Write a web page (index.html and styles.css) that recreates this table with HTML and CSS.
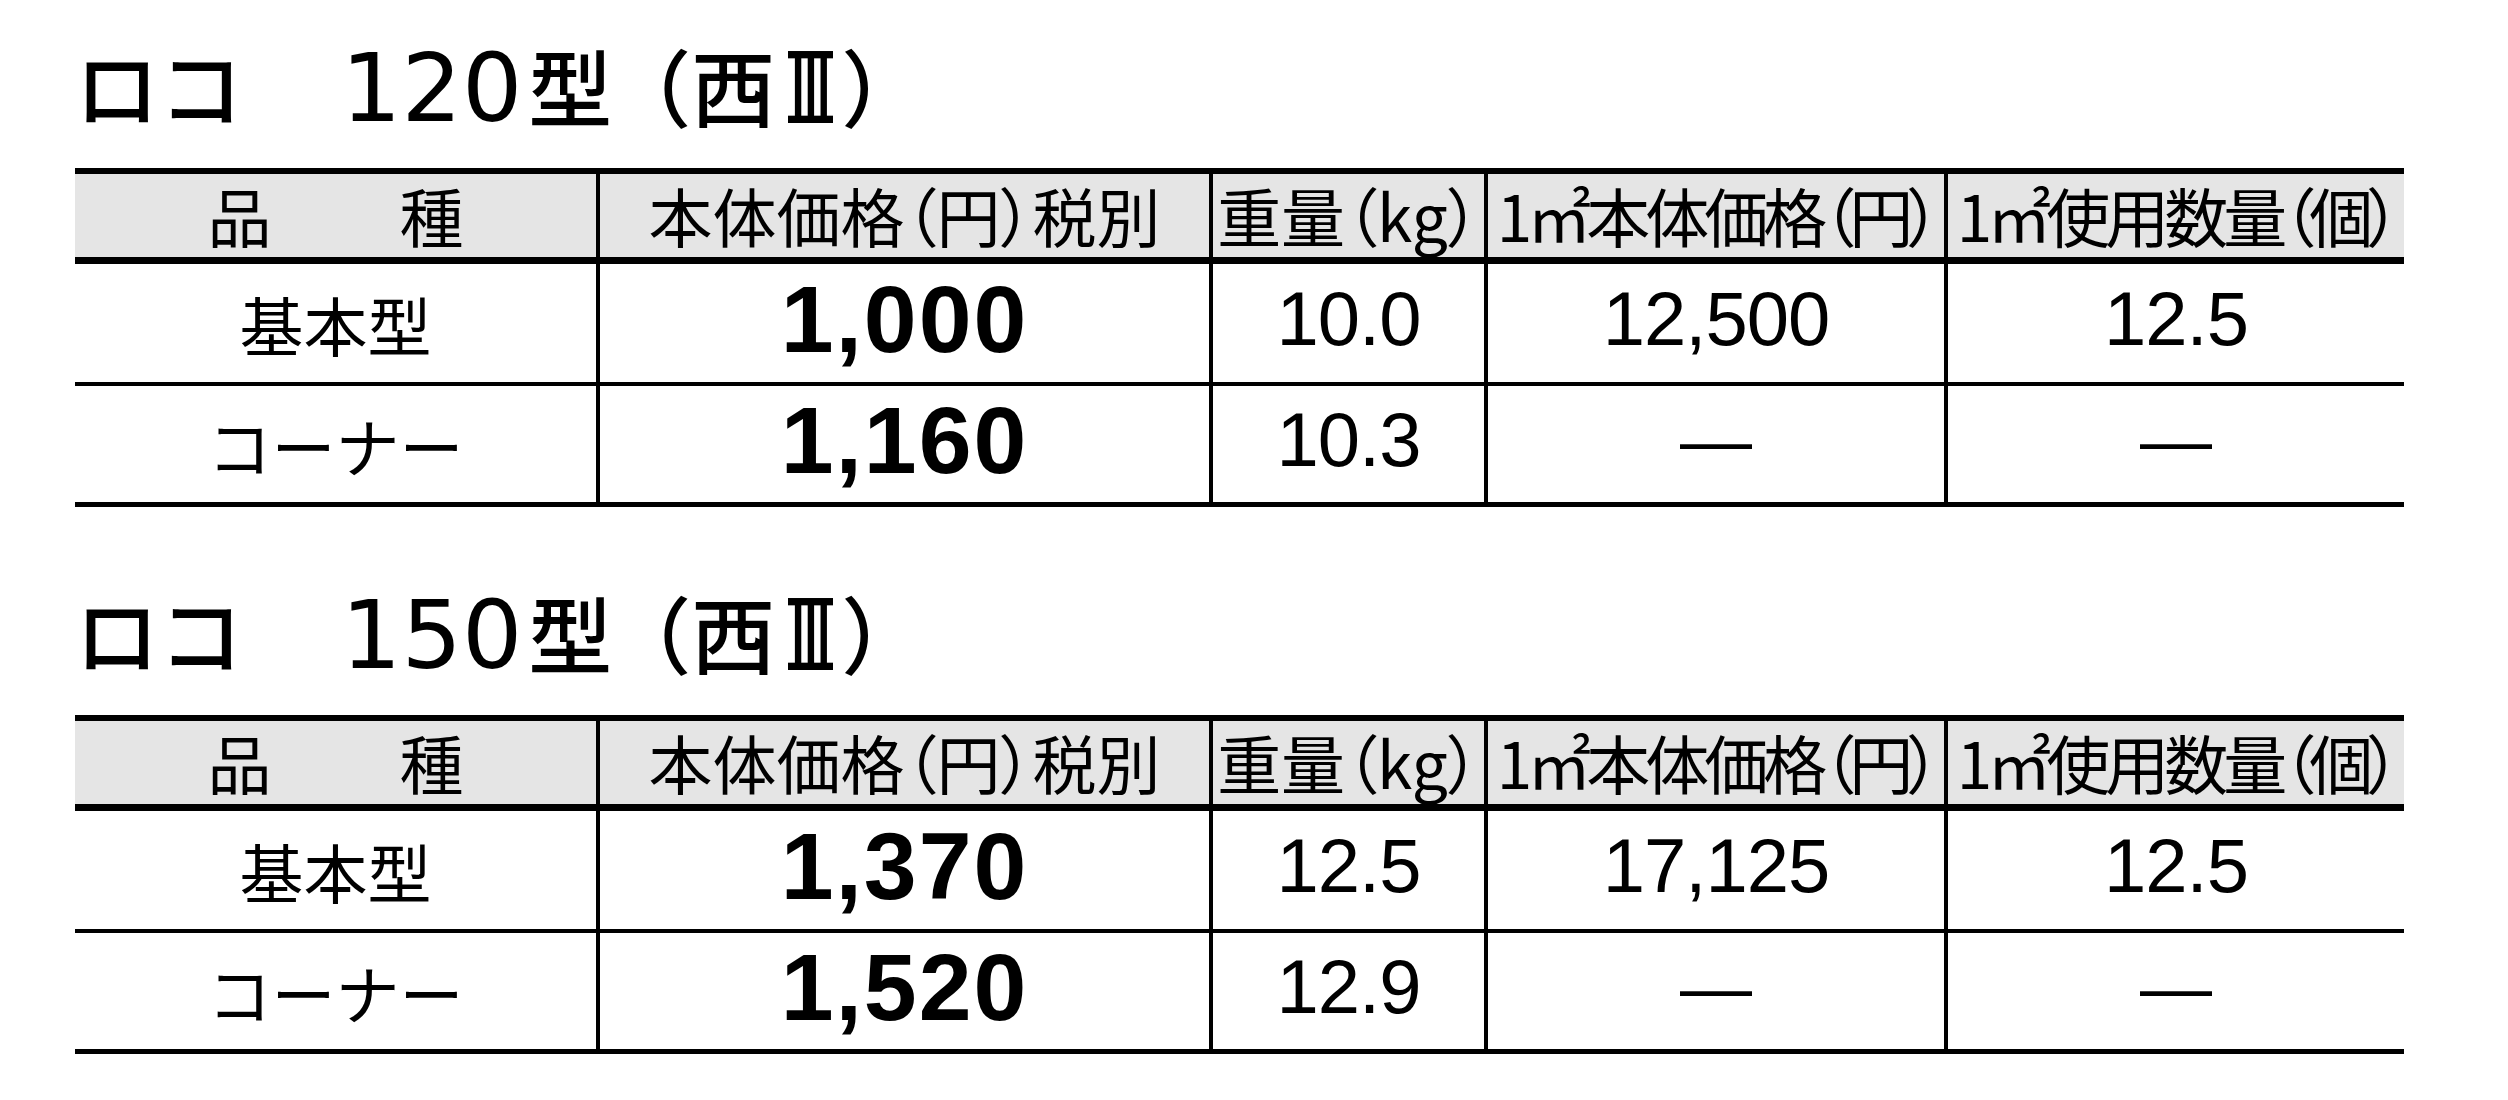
FILE: index.html
```html
<!DOCTYPE html>
<html lang="ja">
<head>
<meta charset="utf-8">
<title>ロコ 価格表</title>
<link rel="stylesheet" href="styles.css">
</head>
<body>
<div class="page">
  <section class="block">
    <h2 class="title">ロコ　<span class="model">120</span>型<span class="spec">（西<span class="roman">Ⅲ</span>）</span></h2>
    <table class="price-table">
      <colgroup>
        <col class="c-name"><col class="c-price"><col class="c-weight"><col class="c-area-price"><col class="c-area-qty">
      </colgroup>
      <thead>
        <tr class="head">
          <th>品　　種</th>
          <th>本体価格（円）税別</th>
          <th>重量（kg）</th>
          <th class="tight">1㎡本体価格（円）</th>
          <th class="tight">1㎡使用数量（個）</th>
        </tr>
      </thead>
      <tbody>
        <tr class="row-a">
          <td class="jp">基本型</td>
          <td class="price">1,000</td>
          <td class="num">10.0</td>
          <td class="num">12,500</td>
          <td class="num">12.5</td>
        </tr>
        <tr class="row-b">
          <td class="jp">コーナー</td>
          <td class="price">1,160</td>
          <td class="num">10.3</td>
          <td class="num dash">—</td>
          <td class="num dash">—</td>
        </tr>
      </tbody>
    </table>
  </section>

  <section class="block">
    <h2 class="title">ロコ　<span class="model">150</span>型<span class="spec">（西<span class="roman">Ⅲ</span>）</span></h2>
    <table class="price-table">
      <colgroup>
        <col class="c-name"><col class="c-price"><col class="c-weight"><col class="c-area-price"><col class="c-area-qty">
      </colgroup>
      <thead>
        <tr class="head">
          <th>品　　種</th>
          <th>本体価格（円）税別</th>
          <th>重量（kg）</th>
          <th class="tight">1㎡本体価格（円）</th>
          <th class="tight">1㎡使用数量（個）</th>
        </tr>
      </thead>
      <tbody>
        <tr class="row-a">
          <td class="jp">基本型</td>
          <td class="price">1,370</td>
          <td class="num">12.5</td>
          <td class="num">17,125</td>
          <td class="num">12.5</td>
        </tr>
        <tr class="row-b">
          <td class="jp">コーナー</td>
          <td class="price">1,520</td>
          <td class="num">12.9</td>
          <td class="num dash">—</td>
          <td class="num dash">—</td>
        </tr>
      </tbody>
    </table>
  </section>
</div>
</body>
</html>
```

FILE: styles.css
```css
html, body {
  margin: 0;
  padding: 0;
  background: #ffffff;
  color: #000000;
}

.page {
  padding: 39px 0 0 75px;
  width: 2329px;
  font-family: "Noto Sans CJK JP", "Noto Sans", sans-serif;
}

.block + .block {
  margin-top: 79px;
}

/* ---------- section title ---------- */
.title {
  margin: 0 0 37px 0;
  height: 92px;
  font-size: 84px;
  line-height: 92px;
  font-weight: 500;
  white-space: nowrap;
}

.title .model {
  font-family: "DejaVu Sans", sans-serif;
  font-weight: 400;
  font-size: 95px;
  line-height: 0;
  margin: 0 6px 0 14px;
}

.title .spec {
  margin-left: -5px;
}

.title .roman {
  display: inline-block;
  font-family: "DejaVu Sans", sans-serif;
  font-weight: 400;
  font-size: 65px;
  line-height: 49px;
  height: 47px;
  border-top: 6px solid #000;
  border-bottom: 6px solid #000;
  vertical-align: 4px;
  margin: 0 8px 0 13px;
  transform: scaleY(1.22);
  transform-origin: 50% 100%;
}

/* ---------- table ---------- */
.price-table {
  width: 2329px;
  table-layout: fixed;
  border-collapse: separate;
  border-spacing: 0;
}

.c-name { width: 521px; }
.c-price { width: 613px; }
.c-weight { width: 275px; }
.c-area-price { width: 460px; }
.c-area-qty { width: 460px; }

.price-table th,
.price-table td {
  box-sizing: border-box;
  padding: 0;
  text-align: center;
  vertical-align: middle;
  white-space: nowrap;
  overflow: visible;
}

.price-table th + th,
.price-table td + td {
  border-left: 4px solid #000;
}

.head th {
  height: 96px;
  background: #e5e5e5;
  border-top: 6px solid #000;
  border-bottom: 7px solid #000;
  font-family: "Noto Sans CJK JP", sans-serif;
  font-weight: 400;
  font-size: 64px;
  line-height: 64px;
  padding-bottom: 4px;
  font-feature-settings: "palt" 1;
}

.head th.tight {
  letter-spacing: -5px;
}

.row-a td {
  height: 122px;
  border-bottom: 4px solid #000;
}

.row-b td {
  height: 121px;
  border-bottom: 5px solid #000;
}

.jp {
  font-family: "Noto Sans CJK JP", sans-serif;
  font-size: 64px;
  line-height: 64px;
  padding-bottom: 8px;
}

.price-table td.price {
  font-family: "Liberation Sans", Arial, sans-serif;
  font-weight: 700;
  font-size: 95px;
  line-height: 95px;
  letter-spacing: 2px;
  padding-bottom: 7px;
}

.price-table td.num {
  font-family: "Liberation Sans", Arial, sans-serif;
  font-weight: 400;
  font-size: 76px;
  line-height: 76px;
  letter-spacing: -1px;
  padding-bottom: 8px;
}

.price-table td.dash {
  font-size: 72px;
  letter-spacing: 0;
}
```
